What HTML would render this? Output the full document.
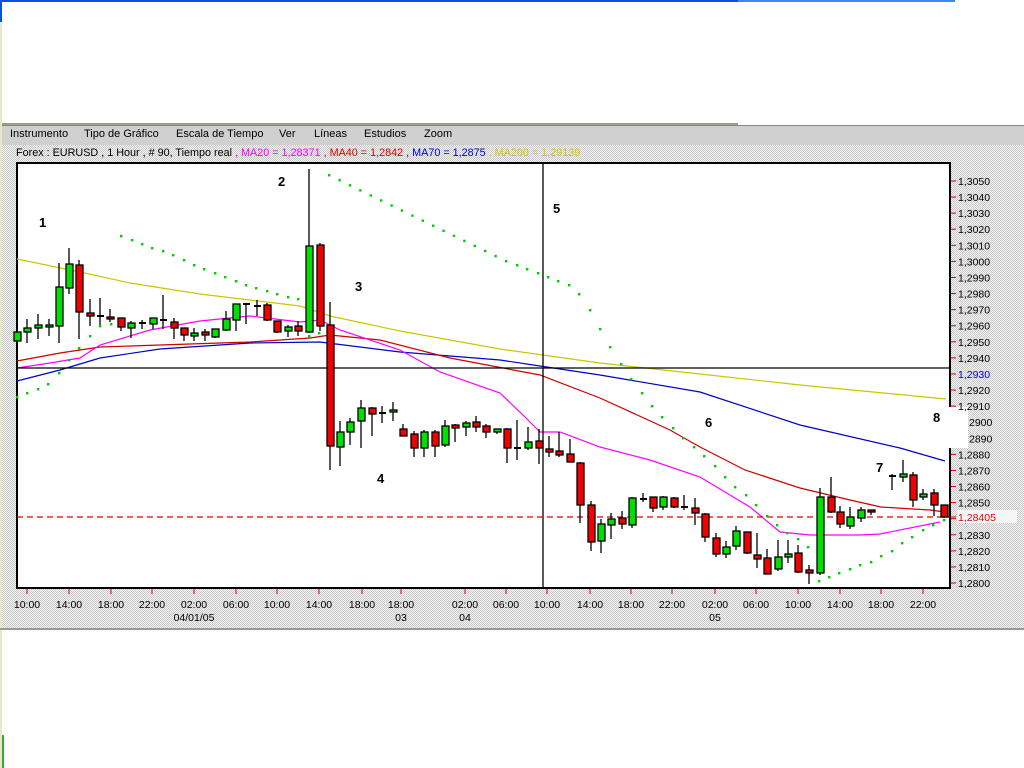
<!DOCTYPE html>
<html><head><meta charset="utf-8"><style>
html,body{margin:0;padding:0;background:#fff;width:1024px;height:768px;overflow:hidden;font-family:"Liberation Sans",sans-serif}
.dot{background:repeating-conic-gradient(#c8c8c8 0 25%,#f4f4f4 0 50%) 0 0/2px 2px}
</style></head><body>
<div style="position:absolute;left:0;top:0;width:738px;height:2px;background:#0a50e0"></div>
<div style="position:absolute;left:738px;top:0;width:217px;height:2px;background:#3a8af0"></div>
<div style="position:absolute;left:0;top:0;width:2px;height:22px;background:#0a50e0"></div>
<div style="position:absolute;left:0;top:22px;width:2px;height:746px;background:#e8e8c8"></div>
<div style="position:absolute;left:2px;top:123px;width:736px;height:2px;background:#a0a080"></div>
<div style="position:absolute;left:2px;top:125px;width:1022px;height:20px;background:#d0d0d0;border-top:1px solid #888"></div>
<div style="position:absolute;left:10px;top:128px;font-size:11px;color:#000;white-space:pre;word-spacing:0">Instrumento</div>
<div style="position:absolute;left:84px;top:128px;font-size:11px">Tipo de Gráfico</div>
<div style="position:absolute;left:176px;top:128px;font-size:11px">Escala de Tiempo</div>
<div style="position:absolute;left:279px;top:128px;font-size:11px">Ver</div>
<div style="position:absolute;left:314px;top:128px;font-size:11px">Líneas</div>
<div style="position:absolute;left:364px;top:128px;font-size:11px">Estudios</div>
<div style="position:absolute;left:424px;top:128px;font-size:11px">Zoom</div>
<div class="dot" style="position:absolute;left:2px;top:145px;width:1022px;height:483px"></div>
<div style="position:absolute;left:16px;top:147px;font-size:10.8px;white-space:pre">Forex : EURUSD , 1 Hour , # 90, Tiempo real <span style="color:#f0f">, MA20 = 1,28371</span> <span style="color:#d00">, MA40 = 1,2842</span> <span style="color:#00c">, MA70 = 1,2875</span> <span style="color:#cc0">, MA200 = 1,29139</span></div>
<div style="position:absolute;left:0;top:628px;width:1024px;height:2px;background:#999"></div>
<div style="position:absolute;left:2px;top:735px;width:2px;height:33px;background:#3a3"></div>
<svg width="1024" height="768" style="position:absolute;left:0;top:0" font-family="Liberation Sans,sans-serif">
<rect x="17" y="163" width="933" height="425" fill="#fff" stroke="#000" stroke-width="2"/>
<rect x="930" y="407" width="38" height="41" fill="#fff"/>
<g fill="none" stroke-width="1.2">
<polyline stroke="#c8c800" points="17,259 80,272 130,283 200,294 300,306 330,316 400,331 500,349 600,363 700,374 800,385 946,399"/>
<polyline stroke="#0000cc" points="17,381 60,370 100,358 160,349 250,343 320,342 400,352 500,360 540,366 600,375 700,392 800,425 900,448 945,461"/>
<polyline stroke="#cc0000" points="17,361 60,353 100,347 160,345 250,342 310,338 330,335 380,340 450,358 540,375 600,398 670,430 700,447 745,470 800,488 850,500 881,507 930,510 945,512"/>
<polyline stroke="#ff00ff" points="17,368 50,363 80,358 100,345 150,330 200,321 250,316 300,322 320,320 340,330 400,350 440,372 500,393 525,417 540,432 560,432 600,447 650,460 700,477 750,507 780,532 810,535 860,535 880,534 940,522"/>
</g>
<line x1="17" y1="368" x2="950" y2="368" stroke="#000" stroke-width="1.3"/>
<line x1="543" y1="163" x2="543" y2="588" stroke="#000" stroke-width="1.3"/>
<line x1="17" y1="517" x2="950" y2="517" stroke="#d00" stroke-dasharray="6,4" stroke-width="1.2"/>
<g fill="#0c0" id="dots"></g>
<g id="c" stroke="#000" stroke-width="1.3"></g>
<g font-weight="bold" font-size="13" fill="#000">
<text x="39" y="227">1</text><text x="278" y="186">2</text><text x="355" y="291">3</text><text x="377" y="483">4</text><text x="553" y="213">5</text><text x="705" y="427">6</text><text x="876" y="472">7</text><text x="933" y="422">8</text>
</g>
<g id="ax" font-size="10.5"></g>
</svg>
<script>
var C=[[17,332,341,330,352,'g'],[27,328,332,319,343,'g'],[38,325,328,314,339,'g'],[49,325,327,319,336,'g'],[59,287,326,263,343,'g'],[69,264,288,248,294,'g'],[79,265,312,260,339,'r'],[90,313,316,299,326,'r'],[100,316,316,298,325,'d'],[110,317,319,309,322,'r'],[121,318,327,318,331,'r'],[131,323,328,321,338,'g'],[142,323,323,320,329,'d'],[153,318,324,318,329,'g'],[163,320,320,295,329,'d'],[174,322,328,318,339,'r'],[184,328,335,328,341,'r'],[194,333,336,328,341,'g'],[205,332,335,329,341,'r'],[215,329,337,329,338,'g'],[226,319,330,311,331,'g'],[236,304,320,304,331,'g'],[246,304,304,303,324,'d'],[257,306,306,300,316,'d'],[267,305,320,303,321,'r'],[277,321,332,321,333,'r'],[288,327,331,325,337,'g'],[298,326,331,321,336,'r'],[309,246,332,169,333,'g'],[320,245,326,243,331,'r'],[330,325,446,302,470,'r'],[340,432,447,421,466,'g'],[350,422,432,418,445,'g'],[361,408,421,400,448,'g'],[372,408,414,407,436,'r'],[382,413,413,406,423,'d'],[393,410,412,402,421,'g'],[403,429,436,424,436,'r'],[414,434,448,431,457,'r'],[424,432,448,430,457,'g'],[435,432,446,430,457,'r'],[445,426,445,420,447,'g'],[455,425,428,424,442,'r'],[466,423,427,421,436,'g'],[476,422,427,416,432,'r'],[486,426,432,424,438,'r'],[497,429,432,429,434,'g'],[507,429,448,428,463,'r'],[517,448,448,420,460,'d'],[528,442,448,427,450,'g'],[539,441,448,429,464,'r'],[549,449,452,436,457,'r'],[559,451,455,432,457,'r'],[570,454,462,439,462,'r'],[580,463,505,462,523,'r'],[591,505,542,501,551,'r'],[601,524,541,519,553,'g'],[611,519,525,513,539,'g'],[622,518,524,511,529,'r'],[632,498,525,497,528,'g'],[643,499,499,493,502,'d'],[653,497,508,497,512,'r'],[663,497,507,496,510,'g'],[674,498,507,497,508,'r'],[684,507,507,495,510,'d'],[695,508,513,498,525,'r'],[705,514,537,513,542,'r'],[716,538,554,533,557,'r'],[726,547,554,541,558,'g'],[736,531,546,526,550,'g'],[747,532,553,532,554,'r'],[757,555,559,533,568,'r'],[767,558,574,549,573,'r'],[778,557,569,540,571,'g'],[788,554,557,540,563,'g'],[798,553,572,545,573,'r'],[809,570,573,565,584,'r'],[820,497,573,488,575,'g'],[831,497,512,477,513,'r'],[840,512,524,506,528,'r'],[850,517,526,507,529,'g'],[861,510,518,507,522,'g'],[871,510,512,510,515,'r'],[892,476,476,474,490,'d'],[903,474,477,460,482,'g'],[913,475,500,472,507,'r'],[923,494,497,489,500,'g'],[934,493,505,489,516,'r'],[944,505,517,505,518,'r']];
var s='';C.forEach(function(c){var x=c[0];s+='<line x1="'+x+'" y1="'+c[3]+'" x2="'+x+'" y2="'+c[4]+'"/>';
if(c[5]=='d')s+='<line x1="'+(x-3)+'" y1="'+c[1]+'" x2="'+(x+4)+'" y2="'+c[1]+'" stroke-width="2"/>';
else s+='<rect x="'+(x-3)+'" y="'+c[1]+'" width="7" height="'+Math.max(2,c[2]-c[1])+'" fill="'+(c[5]=='g'?'#00e000':'#f00000')+'"/>';});
document.getElementById('c').innerHTML=s;
var D=[[17,397],[27,393],[38,389],[48,384],[59,373],[69,360],[79,348],[90,336],[100,326],[111,324],[121,236],[132,240],[142,244],[152,248],[163,251],[173,255],[184,260],[194,265],[204,269],[215,273],[225,277],[236,281],[246,285],[256,288],[267,291],[277,294],[288,297],[298,299],[309,336],[319,333]];
for(var x=329;x<500;x+=10.4)D.push([x,175+0.486*(x-329)]);
D=D.concat([[506,261],[517,265],[527,269],[538,273],[548,277],[558,281],[569,285],[579,294],[590,310],[600,329],[610,347],[621,364],[631,379],[642,393],[652,406],[662,417],[673,428],[683,438],[694,447],[704,456],[715,466],[725,477],[735,487],[746,495],[756,505],[767,516],[777,525],[787,533],[798,539],[808,547],[819,581],[829,577],[839,573],[850,569],[860,565],[871,562],[881,556],[892,551],[902,543],[912,537],[923,530],[933,525],[944,520]]);
s='';D.forEach(function(d){s+='<rect x="'+(d[0]-1)+'" y="'+(d[1]-1)+'" width="2.4" height="2.4"/>';});
document.getElementById('dots').innerHTML=s;
s='';for(var i=0;i<=25;i++){var p=13050-i*10,y=181+i*16.08;if(p==12900||p==12890){s+='<text x="969" y="'+(y+4)+'">'+(p==12900?'2900':'2890')+'</text>';continue;}
s+='<line x1="951" y1="'+y+'" x2="956" y2="'+y+'" stroke="#d00"/>';
s+='<text x="958" y="'+(y+4)+'" fill="'+(p==12930?'#00c':'#000')+'">1,'+String(p).slice(1)+'</text>';}
s+='<line x1="951" y1="517" x2="956" y2="517" stroke="#d00"/><rect x="957" y="510" width="60" height="13" fill="#f6f6f6"/><text x="958" y="521" fill="#e00">1,28405</text>';
var T=[[27,'10:00'],[69,'14:00'],[111,'18:00'],[152,'22:00'],[194,'02:00'],[236,'06:00'],[277,'10:00'],[319,'14:00'],[362,'18:00'],[401,'18:00'],[465,'02:00'],[506,'06:00'],[547,'10:00'],[590,'14:00'],[631,'18:00'],[672,'22:00'],[715,'02:00'],[756,'06:00'],[798,'10:00'],[840,'14:00'],[881,'18:00'],[923,'22:00']];
T.forEach(function(t){s+='<line x1="'+t[0]+'" y1="589" x2="'+t[0]+'" y2="594" stroke="#d00"/><text x="'+t[0]+'" y="608" text-anchor="middle">'+t[1]+'</text>';});
[[194,'04/01/05'],[401,'03'],[465,'04'],[715,'05']].forEach(function(t){s+='<text x="'+t[0]+'" y="621" text-anchor="middle">'+t[1]+'</text>';});
document.getElementById('ax').innerHTML=s;
</script>
</body></html>
